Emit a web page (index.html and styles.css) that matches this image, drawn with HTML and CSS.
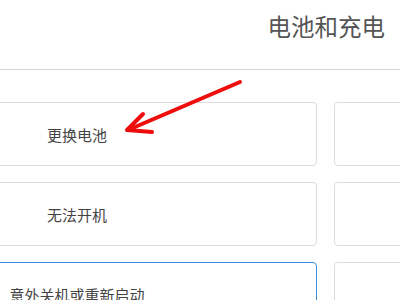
FILE: index.html
```html
<!DOCTYPE html>
<html lang="zh-CN">
  <head>
    <meta charset="UTF-8" />
    <meta name="viewport" content="width=device-width, initial-scale=1.0" />
    <title>电池和充电</title>
    <link rel="stylesheet" href="styles.css">
  </head>
  <body>
    <header class="topbar">
      <h1 class="title">电池和充电</h1>
    </header>
    <main class="topics">
      <a class="topic" href="#">更换电池</a>
      <a class="topic" href="#"></a>
      <a class="topic" href="#">无法开机</a>
      <a class="topic" href="#"></a>
      <a class="topic active" href="#">意外关机或重新启动</a>
      <a class="topic" href="#"></a>
    </main>
    <svg class="pointer" width="400" height="300" viewBox="0 0 400 300">
      <g fill="none" stroke="#ee0d0d" stroke-width="4" stroke-linecap="round" stroke-linejoin="round">
        <path d="M240 82 L128 130" />
        <path d="M143 114 L127 130 L152 132" />
      </g>
    </svg>
  </body>
</html>
```

FILE: styles.css
```css
* {
  box-sizing: border-box;
}
body {
  margin: 0;
  width: 400px;
  height: 300px;
  overflow: hidden;
  background: #fff;
  font-family: "Noto Sans CJK SC", "Noto Sans", sans-serif;
  color: #444;
}
.topbar {
  height: 70px;
  border-bottom: 1px solid #d6d6d6;
  display: flex;
  justify-content: flex-end;
  align-items: flex-start;
  padding: 10px 15px 0 0;
}
.title {
  margin: 0;
  font-size: 23.5px;
  font-weight: 400;
  line-height: 32px;
  color: #555;
}
.topics {
  display: grid;
  grid-template-columns: 480px 480px;
  gap: 16px 17px;
  margin: 32px 0 0 -163px;
}
.topic {
  height: 64px;
  border: 1px solid #dcdcdc;
  border-radius: 4px;
  display: flex;
  align-items: center;
  justify-content: center;
  font-size: 15px;
  color: #444;
  text-decoration: none;
}
.topic.active {
  border-color: #3f8fd8;
}
.pointer {
  position: absolute;
  left: 0;
  top: 0;
  pointer-events: none;
}
```
